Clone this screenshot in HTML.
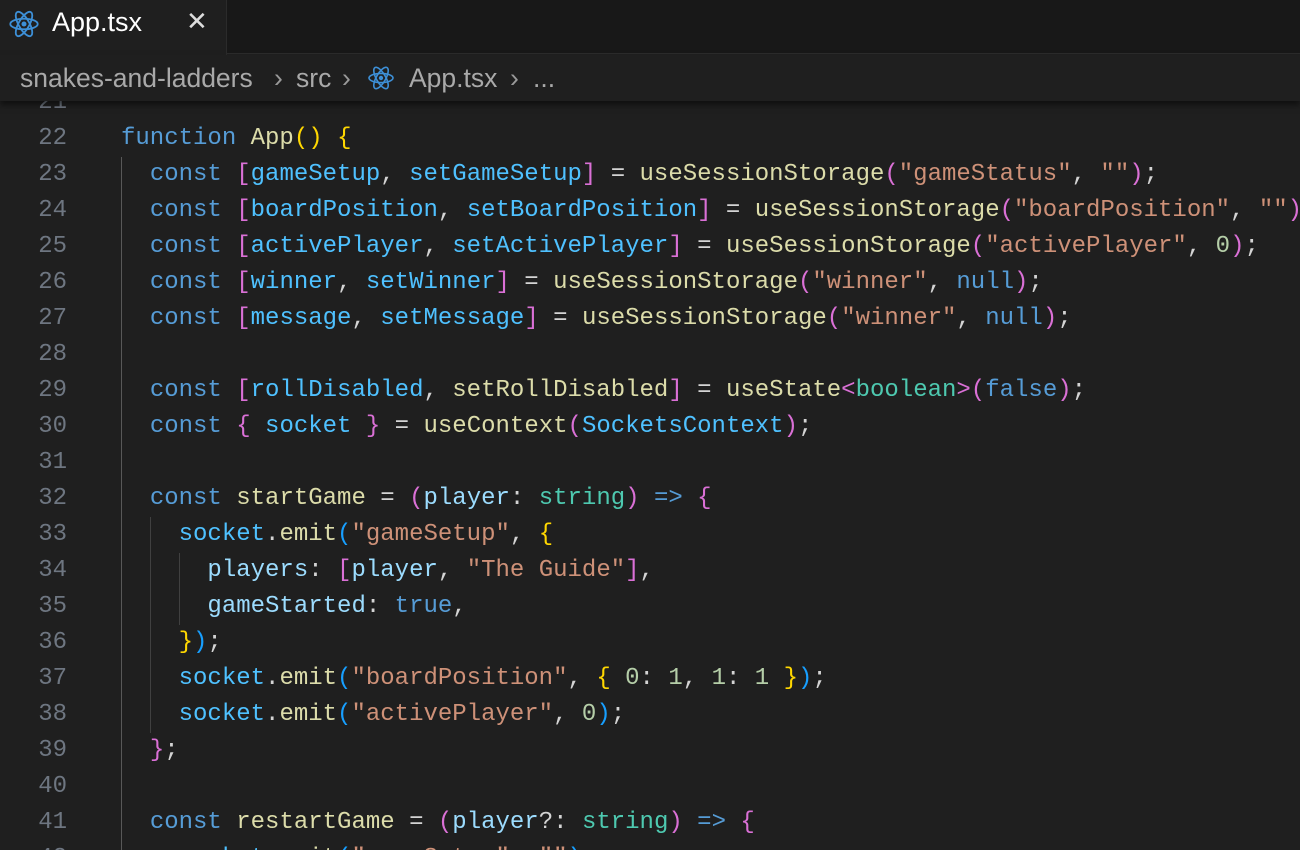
<!DOCTYPE html>
<html><head><meta charset="utf-8"><style>
html,body{margin:0;width:1300px;height:850px;overflow:hidden}
body{background:#1f1f1f;font-family:"Liberation Sans",sans-serif;position:relative}
.tabbar{position:absolute;left:0;top:0;width:1300px;height:54px;background:#181818;border-bottom:1px solid #2b2b2b;box-sizing:border-box}
.tab{position:absolute;left:0;top:0;width:227px;height:55px;background:#1f1f1f;border-right:1px solid #2b2b2b;box-sizing:border-box}
.tab .t{position:absolute;left:52px;top:7px;font-size:27px;color:#fff}
.tab .x{position:absolute;left:186px;top:6px;font-size:26px;color:#ddd}
.bc{position:absolute;left:0;top:55px;width:1300px;height:46px;background:#1f1f1f;box-shadow:0 4px 6px rgba(0,0,0,.5);z-index:2;font-size:26.5px;color:#a9a9a9}
.bc span{position:absolute;top:8px}
.code{position:absolute;left:0;top:2px;width:1300px;height:850px;font-family:"Liberation Mono",monospace;font-size:24px}
.ln{position:absolute;left:0;width:67px;text-align:right;color:#6e7681;line-height:36px;height:36px}
.l{position:absolute;left:121px;line-height:36px;height:36px;white-space:pre;color:#d4d4d4}
.g{position:absolute;width:1px;background:#404040}
.k{color:#569cd6}.f{color:#dcdcaa}.v{color:#9cdcfe}.c{color:#4fc1ff}.s{color:#ce9178}.n{color:#b5cea8}.t2{color:#4ec9b0}
.y{color:#ffd700}.p{color:#da70d6}.b{color:#179fff}
</style></head><body>
<div class="code">
<div class="ln" style="top:83px">21</div>
<div class="ln" style="top:119px">22</div><div class="l" style="top:119px"><span class="k">function</span> <span class="f">App</span><span class="y">()</span> <span class="y">{</span></div>
<div class="ln" style="top:155px">23</div><div class="l" style="top:155px">  <span class="k">const</span> <span class="p">[</span><span class="c">gameSetup</span>, <span class="c">setGameSetup</span><span class="p">]</span> = <span class="f">useSessionStorage</span><span class="p">(</span><span class="s">"gameStatus"</span>, <span class="s">""</span><span class="p">)</span>;</div>
<div class="ln" style="top:191px">24</div><div class="l" style="top:191px">  <span class="k">const</span> <span class="p">[</span><span class="c">boardPosition</span>, <span class="c">setBoardPosition</span><span class="p">]</span> = <span class="f">useSessionStorage</span><span class="p">(</span><span class="s">"boardPosition"</span>, <span class="s">""</span><span class="p">)</span>;</div>
<div class="ln" style="top:227px">25</div><div class="l" style="top:227px">  <span class="k">const</span> <span class="p">[</span><span class="c">activePlayer</span>, <span class="c">setActivePlayer</span><span class="p">]</span> = <span class="f">useSessionStorage</span><span class="p">(</span><span class="s">"activePlayer"</span>, <span class="n">0</span><span class="p">)</span>;</div>
<div class="ln" style="top:263px">26</div><div class="l" style="top:263px">  <span class="k">const</span> <span class="p">[</span><span class="c">winner</span>, <span class="c">setWinner</span><span class="p">]</span> = <span class="f">useSessionStorage</span><span class="p">(</span><span class="s">"winner"</span>, <span class="k">null</span><span class="p">)</span>;</div>
<div class="ln" style="top:299px">27</div><div class="l" style="top:299px">  <span class="k">const</span> <span class="p">[</span><span class="c">message</span>, <span class="c">setMessage</span><span class="p">]</span> = <span class="f">useSessionStorage</span><span class="p">(</span><span class="s">"winner"</span>, <span class="k">null</span><span class="p">)</span>;</div>
<div class="ln" style="top:335px">28</div>
<div class="ln" style="top:371px">29</div><div class="l" style="top:371px">  <span class="k">const</span> <span class="p">[</span><span class="c">rollDisabled</span>, <span class="f">setRollDisabled</span><span class="p">]</span> = <span class="f">useState</span><span class="p">&lt;</span><span class="t2">boolean</span><span class="p">&gt;(</span><span class="k">false</span><span class="p">)</span>;</div>
<div class="ln" style="top:407px">30</div><div class="l" style="top:407px">  <span class="k">const</span> <span class="p">{</span> <span class="c">socket</span> <span class="p">}</span> = <span class="f">useContext</span><span class="p">(</span><span class="c">SocketsContext</span><span class="p">)</span>;</div>
<div class="ln" style="top:443px">31</div>
<div class="ln" style="top:479px">32</div><div class="l" style="top:479px">  <span class="k">const</span> <span class="f">startGame</span> = <span class="p">(</span><span class="v">player</span>: <span class="t2">string</span><span class="p">)</span> <span class="k">=&gt;</span> <span class="p">{</span></div>
<div class="ln" style="top:515px">33</div><div class="l" style="top:515px">    <span class="c">socket</span>.<span class="f">emit</span><span class="b">(</span><span class="s">"gameSetup"</span>, <span class="y">{</span></div>
<div class="ln" style="top:551px">34</div><div class="l" style="top:551px">      <span class="v">players</span>: <span class="p">[</span><span class="v">player</span>, <span class="s">"The Guide"</span><span class="p">]</span>,</div>
<div class="ln" style="top:587px">35</div><div class="l" style="top:587px">      <span class="v">gameStarted</span>: <span class="k">true</span>,</div>
<div class="ln" style="top:623px">36</div><div class="l" style="top:623px">    <span class="y">}</span><span class="b">)</span>;</div>
<div class="ln" style="top:659px">37</div><div class="l" style="top:659px">    <span class="c">socket</span>.<span class="f">emit</span><span class="b">(</span><span class="s">"boardPosition"</span>, <span class="y">{</span> <span class="n">0</span>: <span class="n">1</span>, <span class="n">1</span>: <span class="n">1</span> <span class="y">}</span><span class="b">)</span>;</div>
<div class="ln" style="top:695px">38</div><div class="l" style="top:695px">    <span class="c">socket</span>.<span class="f">emit</span><span class="b">(</span><span class="s">"activePlayer"</span>, <span class="n">0</span><span class="b">)</span>;</div>
<div class="ln" style="top:731px">39</div><div class="l" style="top:731px">  <span class="p">}</span>;</div>
<div class="ln" style="top:767px">40</div>
<div class="ln" style="top:803px">41</div><div class="l" style="top:803px">  <span class="k">const</span> <span class="f">restartGame</span> = <span class="p">(</span><span class="v">player</span>?: <span class="t2">string</span><span class="p">)</span> <span class="k">=&gt;</span> <span class="p">{</span></div>
<div class="ln" style="top:839px">42</div><div class="l" style="top:839px">    <span class="c">socket</span>.<span class="f">emit</span><span class="b">(</span><span class="s">"gameSetup"</span>, <span class="s">""</span><span class="b">)</span>;</div>
<div class="g" style="left:121px;top:155px;height:693px;background:#585858"></div>
<div class="g" style="left:150px;top:515px;height:216px"></div>
<div class="g" style="left:179px;top:551px;height:72px"></div>
</div>
<div class="bc">
<span style="left:20px">snakes-and-ladders</span>
<span style="left:274px;color:#999">&#x203A;</span>
<span style="left:296px">src</span>
<span style="left:342px;color:#999">&#x203A;</span>
<svg style="position:absolute;left:367px;top:10px" width="28" height="26" viewBox="-14 -13 28 26"><g fill="none" stroke="#3d8fd6" stroke-width="1.6"><ellipse rx="12" ry="4.6"/><ellipse rx="12" ry="4.6" transform="rotate(60)"/><ellipse rx="12" ry="4.6" transform="rotate(120)"/></g><circle r="2.2" fill="#3d8fd6"/></svg>
<span style="left:409px">App.tsx</span>
<span style="left:510px;color:#999">&#x203A;</span>
<span style="left:533px">...</span>
</div>
<div class="tabbar"><div class="tab">
<svg style="position:absolute;left:8px;top:9px" width="32" height="30" viewBox="-14 -13 28 26"><g fill="none" stroke="#3d8fd6" stroke-width="1.6"><ellipse rx="12" ry="4.6"/><ellipse rx="12" ry="4.6" transform="rotate(60)"/><ellipse rx="12" ry="4.6" transform="rotate(120)"/></g><circle r="2.2" fill="#3d8fd6"/></svg>
<span class="t">App.tsx</span><span class="x">✕</span>
</div></div>
</body></html>
